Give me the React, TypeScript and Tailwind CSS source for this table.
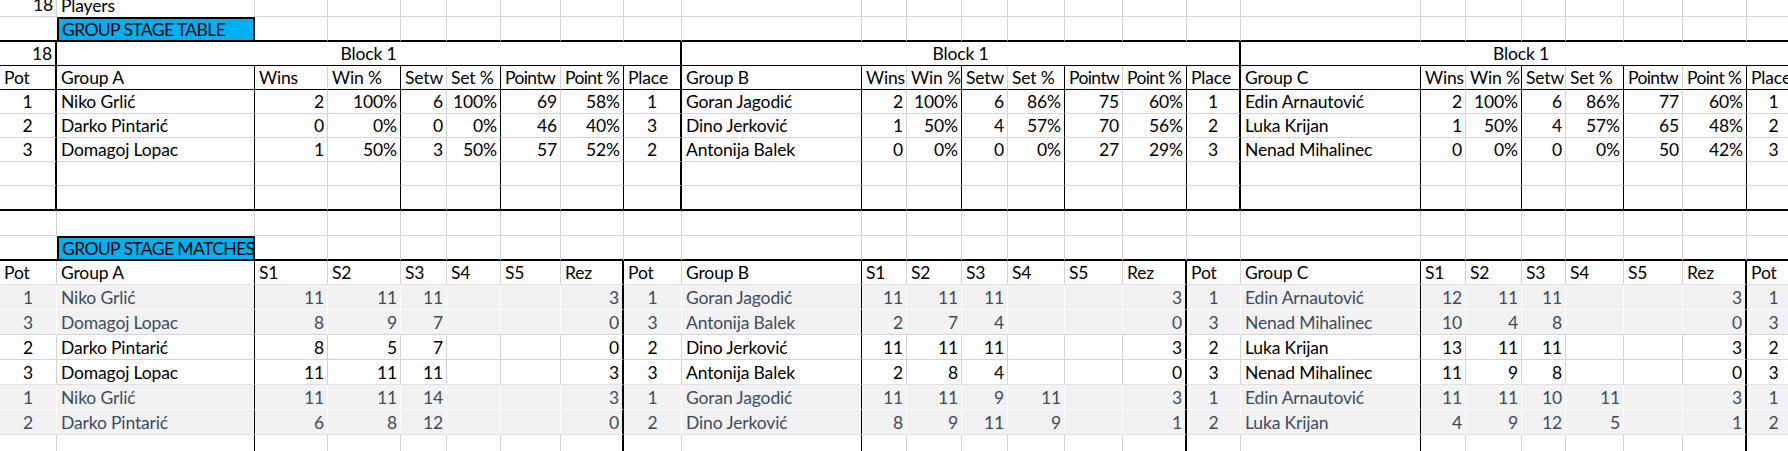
import React from "react";

type Side = "g" | "k" | "K" | "w" | "l" | "n";
type Align = "l" | "c" | "r";

const RIGHT: Record<Side, string> = {
  g: "border-r border-r-[#d4d4d4]",
  k: "border-r border-r-black",
  K: "border-r-2 border-r-black",
  w: "border-r border-r-white",
  l: "border-r border-r-[#e2e2e2]",
  n: "",
};

const BOTTOM: Record<Side, string> = {
  g: "border-b border-b-[#d4d4d4]",
  k: "border-b border-b-black",
  K: "border-b-2 border-b-black",
  w: "border-b border-b-white",
  l: "border-b border-b-[#e2e2e2]",
  n: "",
};

const ALIGN: Record<Align, string> = {
  l: "justify-start pl-[4px] pr-[1px]",
  c: "justify-center px-[1px]",
  r: "justify-end pr-[3px] pl-[1px]",
};

const topHeader = ["Pot", "Group A", "Wins", "Win %", "Setw", "Set %", "Pointw", "Point %", "Place", "Group B", "Wins", "Win %", "Setw", "Set %", "Pointw", "Point %", "Place", "Group C", "Wins", "Win %", "Setw", "Set %", "Pointw", "Point %", "Place"];

const topRows = [
  ["1", "Niko Grlić", "2", "100%", "6", "100%", "69", "58%", "1", "Goran Jagodić", "2", "100%", "6", "86%", "75", "60%", "1", "Edin Arnautović", "2", "100%", "6", "86%", "77", "60%", "1"],
  ["2", "Darko Pintarić", "0", "0%", "0", "0%", "46", "40%", "3", "Dino Jerković", "1", "50%", "4", "57%", "70", "56%", "2", "Luka Krijan", "1", "50%", "4", "57%", "65", "48%", "2"],
  ["3", "Domagoj Lopac", "1", "50%", "3", "50%", "57", "52%", "2", "Antonija Balek", "0", "0%", "0", "0%", "27", "29%", "3", "Nenad Mihalinec", "0", "0%", "0", "0%", "50", "42%", "3"],
];

const matchHeader = ["Pot", "Group A", "S1", "S2", "S3", "S4", "S5", "Rez", "Pot", "Group B", "S1", "S2", "S3", "S4", "S5", "Rez", "Pot", "Group C", "S1", "S2", "S3", "S4", "S5", "Rez", "Pot"];

const matchRows = [
  ["1", "Niko Grlić", "11", "11", "11", "", "", "3", "1", "Goran Jagodić", "11", "11", "11", "", "", "3", "1", "Edin Arnautović", "12", "11", "11", "", "", "3", "1"],
  ["3", "Domagoj Lopac", "8", "9", "7", "", "", "0", "3", "Antonija Balek", "2", "7", "4", "", "", "0", "3", "Nenad Mihalinec", "10", "4", "8", "", "", "0", "3"],
  ["2", "Darko Pintarić", "8", "5", "7", "", "", "0", "2", "Dino Jerković", "11", "11", "11", "", "", "3", "2", "Luka Krijan", "13", "11", "11", "", "", "3", "2"],
  ["3", "Domagoj Lopac", "11", "11", "11", "", "", "3", "3", "Antonija Balek", "2", "8", "4", "", "", "0", "3", "Nenad Mihalinec", "11", "9", "8", "", "", "0", "3"],
  ["1", "Niko Grlić", "11", "11", "14", "", "", "3", "1", "Goran Jagodić", "11", "11", "9", "11", "", "3", "1", "Edin Arnautović", "11", "11", "10", "11", "", "3", "1"],
  ["2", "Darko Pintarić", "6", "8", "12", "", "", "0", "2", "Dino Jerković", "8", "9", "11", "9", "", "1", "2", "Luka Krijan", "4", "9", "12", "5", "", "1", "2"],
];

// vertical borders per column
const topRight: Side[] = ["K", "k", "g", "k", "g", "k", "g", "k", "K", "k", "g", "k", "g", "k", "g", "k", "K", "k", "g", "k", "g", "k", "g", "k", "g"];
const matchRight: Side[] = ["g", "k", "g", "g", "g", "g", "g", "K", "g", "k", "g", "g", "g", "g", "g", "K", "g", "k", "g", "g", "g", "g", "g", "K", "g"];

const banded = [true, true, false, false, true, true];
const matchBottom: Side[] = ["w", "g", "g", "l", "w", "l"];

const topAlign = (c: number): Align => (c === 0 || c === 8 || c === 16 || c === 24 ? "c" : c === 1 || c === 9 || c === 17 ? "l" : "r");
const matchAlign = (c: number): Align => (c % 8 === 0 ? "c" : c === 1 || c === 9 || c === 17 ? "l" : "r");

const cols25 = Array.from({ length: 25 }, (_, i) => i);

function Cell({
  text = "",
  align = "l",
  right,
  bottom,
  extra = "",
}: {
  text?: string;
  align?: Align;
  right: Side;
  bottom: Side;
  extra?: string;
}) {
  return (
    <div className={`flex items-end overflow-hidden whitespace-nowrap pb-[1px] leading-[20px] ${ALIGN[align]} ${RIGHT[right]} ${BOTTOM[bottom]} ${extra}`}>
      {text}
    </div>
  );
}

function Banner({ text }: { text: string }) {
  return (
    <div className="flex items-end overflow-hidden whitespace-nowrap border-2 border-black bg-[#00b0f0] pl-[3px] text-[17.5px] leading-[20px] tracking-[-0.6px]">
      {text}
    </div>
  );
}

export default function App() {
  return (
    <div className="h-[451px] w-[1788px] overflow-hidden bg-white font-['Lato',sans-serif] text-[17.5px] tracking-[-0.15px] text-black">
      <div className="grid grid-cols-[57px_198px_73px_73px_46px_54px_60px_63px_58px_180px_45px_55px_46px_57px_58px_64px_54px_180px_45px_56px_44px_58px_59px_64px_54px] grid-rows-[17px_25px_24px_24px_24px_24px_24px_24px_25px_25px_25px_24px_25px_25px_25px_25px_25px_25px_16px]">
        {/* row: players count */}
        <Cell text="18" align="r" right="g" bottom="g" extra="leading-[15px]" />
        <Cell text="Players" right="g" bottom="n" extra="leading-[15px]" />
        {cols25.slice(2).map((c) => (
          <Cell key={`p${c}`} right="g" bottom="g" />
        ))}

        {/* row: group stage table banner */}
        <Cell right="n" bottom="K" />
        <Banner text="GROUP STAGE TABLE" />
        {cols25.slice(2).map((c) => (
          <Cell key={`b${c}`} right="g" bottom="K" />
        ))}

        {/* row: block titles */}
        <Cell text="18" align="r" right="K" bottom="k" />
        <Cell text="Block 1" align="c" right="K" bottom="k" extra="col-span-8" />
        <Cell text="Block 1" align="c" right="K" bottom="k" extra="col-span-8" />
        <Cell text="Block 1" align="c" right="n" bottom="k" extra="col-span-8" />

        {/* table header */}
        {topHeader.map((t, c) => (
          <Cell
            key={`h${c}`}
            text={t}
            align="l"
            right={topRight[c]}
            bottom="k"
            extra={t.startsWith("Point") ? "pl-[3px] tracking-[-0.6px]" : ""}
          />
        ))}

        {topRows.map((row, r) =>
          row.map((t, c) => <Cell key={`t${r}-${c}`} text={t} align={topAlign(c)} right={topRight[c]} bottom="g" />)
        )}

        {cols25.map((c) => (
          <Cell key={`e1${c}`} right={topRight[c]} bottom="g" />
        ))}
        {cols25.map((c) => (
          <Cell key={`e2${c}`} right={topRight[c]} bottom="K" />
        ))}

        {/* spacer row */}
        {cols25.map((c) => (
          <Cell key={`s${c}`} right="g" bottom={c === 1 ? "n" : "g"} />
        ))}

        {/* row: group stage matches banner */}
        <Cell right="n" bottom="K" />
        <Banner text="GROUP STAGE MATCHES" />
        {cols25.slice(2).map((c) => (
          <Cell key={`m${c}`} right="g" bottom="K" />
        ))}

        {/* matches header */}
        {matchHeader.map((t, c) => (
          <Cell key={`mh${c}`} text={t} align="l" right={matchRight[c]} bottom="l" />
        ))}

        {matchRows.map((row, r) =>
          row.map((t, c) => {
            const band = banded[r];
            const rs = matchRight[c];
            return (
              <Cell
                key={`mr${r}-${c}`}
                text={t}
                align={matchAlign(c)}
                right={band && rs === "g" ? "w" : rs}
                bottom={matchBottom[r]}
                extra={band ? "bg-[#f2f2f2] text-[#3e4b5e]" : ""}
              />
            );
          })
        )}

        {cols25.map((c) => (
          <Cell key={`z${c}`} right={matchRight[c]} bottom="n" />
        ))}
      </div>
    </div>
  );
}
